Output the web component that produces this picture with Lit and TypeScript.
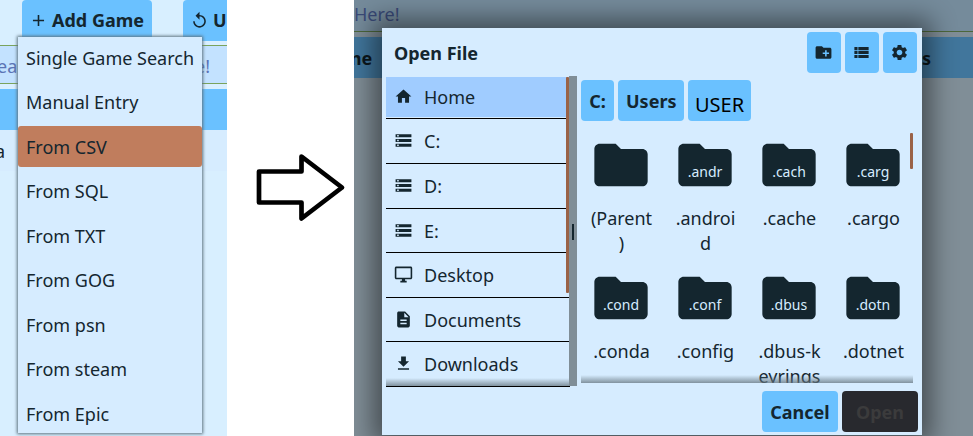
import { LitElement, html, css, svg } from "lit";
import { customElement, property } from "lit/decorators.js";

const ICONS: Record<string, string> = {
  plus: "M19 13h-6v6h-2v-6H5v-2h6V5h2v6h6v2z",
  replay: "M12 5V1L7 6l5 5V7c3.31 0 6 2.69 6 6s-2.69 6-6 6-6-2.69-6-6H4c0 4.42 3.58 8 8 8s8-3.58 8-8-3.58-8-8-8z",
  home: "M10 20v-6h4v6h5v-8h3L12 3 2 12h3v8z",
  storage: "M2 20h20v-4H2v4zm2-3h2v2H4v-2zM2 4v4h20V4H2zm4 3H4V5h2v2zm-4 7h20v-4H2v4zm2-3h2v2H4v-2z",
  desktop: "M21 2H3c-1.1 0-2 .9-2 2v12c0 1.1.9 2 2 2h7v2H8v2h8v-2h-2v-2h7c1.100 0 2-.9 2-2V4c0-1.100-.9-2-2-2zm0 14H3V4h18v12z",
  document: "M14 2H6c-1.100 0-1.990.9-1.990 2L4 20c0 1.100.89 2 1.990 2H18c1.100 0 2-.9 2-2V8l-6-6zm2 16H8v-2h8v2zm0-4H8v-2h8v2zm-3-5V3.500L18.500 9H13z",
  download: "M19 9h-4V3H9v6H5l7 7 7-7zM5 18v2h14v-2H5z",
  newFolder: "M20 6h-8l-2-2H4c-1.110 0-1.990.89-1.990 2L2 18c0 1.110.89 2 2 2h16c1.110 0 2-.89 2-2V8c0-1.110-.89-2-2-2zm-1 8h-3v3h-2v-3h-3v-2h3V9h2v3h3v2z",
  list: "M3 14h4v-4H3v4zm0 5h4v-4H3v4zM3 9h4V5H3v4zm5 5h13v-4H8v4zm0 5h13v-4H8v4zM8 5v4h13V5H8z",
  settings: "M19.140 12.940c.04-.3.06-.61.06-.94 0-.32-.02-.64-.07-.94l2.030-1.580c.18-.14.23-.41.12-.61l-1.920-3.320c-.12-.22-.37-.29-.59-.22l-2.390.96c-.5-.38-1.030-.7-1.620-.94l-.36-2.540c-.04-.24-.24-.41-.48-.41h-3.840c-.24 0-.43.17-.47.41l-.36 2.540c-.59.24-1.130.57-1.620.94l-2.390-.96c-.22-.08-.47 0-.59.22L2.740 8.870c-.12.21-.08.47.12.61l2.030 1.580c-.05.3-.09.63-.09.94s.02.64.07.94l-2.030 1.580c-.18.14-.23.41-.12.61l1.920 3.320c.12.22.37.29.59.22l2.390-.96c.5.38 1.030.7 1.620.94l.36 2.540c.05.24.24.41.48.41h3.840c.24 0 .44-.17.47-.41l.36-2.540c.59-.24 1.130-.56 1.620-.94l2.390.96c.22.08.47 0 .59-.22l1.920-3.320c.12-.22.07-.47-.12-.61l-2.010-1.580zM12 15.600c-1.980 0-3.600-1.620-3.600-3.600s1.620-3.600 3.600-3.600 3.600 1.620 3.600 3.600-1.620 3.600-3.600 3.600z",
  folder: "M10 4H4c-1.100 0-1.990.9-1.990 2L2 18c0 1.100.9 2 2 2h16c1.100 0 2-.9 2-2V8c0-1.100-.9-2-2-2h-8l-2-2z",
};

@customElement("ui-icon")
class UiIcon extends LitElement {
  @property() name = "";
  static styles = css`
    :host { display: block; width: 19px; height: 19px; flex: none; }
    svg { display: block; width: 100%; height: 100%; fill: #14262f; }
  `;
  render() {
    return html`<svg viewBox="0 0 24 24">${svg`<path fill-rule="evenodd" d=${ICONS[this.name]} />`}</svg>`;
  }
}

@customElement("import-menu")
class ImportMenu extends LitElement {
  static styles = css`
    :host { display: block; position: relative; width: 227px; height: 436px; overflow: hidden; background: #d8efff; }
    .toolbar { display: flex; gap: 31px; padding-left: 22px; height: 41px; }
    .btn { box-sizing: border-box; display: flex; align-items: center; gap: 4px; height: 41px; width: 130px; flex: none; padding: 0 0 1px 7px; border-radius: 4px; background: #6ac1ff; font-weight: 700; font-size: 18px; white-space: nowrap; }
    .search { box-sizing: border-box; height: 39px; margin: 4px -4px 0; padding: 0 20px 0 1px; border: 1px solid #7aa35c; background: #c3e2ff; color: #5a73b5; display: flex; justify-content: space-between; line-height: 41px; }
    .search span:first-child { margin-left: -1px; }
    .head { height: 41px; margin-top: 5px; background: #6ac1ff; }
    .row { height: 41px; line-height: 42px; background: #d6ecff; }
    .row span { margin-left: -5px; }
    .menu { position: absolute; left: 18px; top: 37px; width: 184px; height: 396px; background: #d6ecff; box-shadow: 0 0 3px 1px #5c717d; }
    .item { height: 41px; margin-bottom: 3.45px; padding-left: 8px; line-height: 42px; border-radius: 3px; white-space: nowrap; }
    .active { background: #c07d5d; }
  `;
  render() {
    const items = ["Single Game Search", "Manual Entry", "From CSV", "From SQL", "From TXT", "From GOG", "From psn", "From steam", "From Epic"];
    return html`
      <div class="toolbar">
        <div class="btn"><ui-icon name="plus"></ui-icon>Add Game</div>
        <div class="btn"><ui-icon name="replay"></ui-icon>Update</div>
      </div>
      <div class="search"><span>ear</span><span>e!</span></div>
      <div class="head"></div>
      <div class="row"><span>a</span></div>
      <div class="menu">${items.map((t) => html`<div class="item ${t === "From CSV" ? "active" : ""}">${t}</div>`)}</div>
    `;
  }
}

@customElement("file-dialog")
class FileDialog extends LitElement {
  static styles = css`
    :host { box-sizing: border-box; display: flex; flex-direction: column; width: 540px; height: 407px; background: #d6ecff; box-shadow: 0 0 24px 9px rgba(0, 0, 0, .46); }
    .title { display: flex; height: 48px; box-sizing: border-box; padding: 4px 5px 0 12px; gap: 4px; }
    .title b { flex: 1; line-height: 42px; }
    .tool { width: 34px; height: 41px; border-radius: 4px; background: #6ac1ff; display: flex; align-items: center; justify-content: center; }
    .tool ui-icon { margin-right: 1px; }
    .body { display: flex; height: 311px; padding-left: 4px; }
    .side { position: relative; width: 183px; height: 310px; }
    .place { box-sizing: border-box; width: 184px; height: 44.6px; border-bottom: 1px solid #000; display: flex; align-items: flex-start; padding: 0 0 0 8px; gap: 11px; line-height: 45.6px; }
    .places { padding-top: 1px; height: 310px; box-sizing: border-box; position: relative; }
    .place ui-icon { margin-top: 12px; }
    .place:first-child { height: 42px; line-height: 41px; background: linear-gradient(#a0ccff 40px, transparent 40px); margin-bottom: .4px; }
    .place:first-child ui-icon { margin-top: 10px; }
    .bar { position: absolute; right: 0; top: 1px; width: 3px; height: 216px; background: #9a6247; border-radius: 1px; }
    .fade { position: absolute; left: 0; right: 0; bottom: 0; height: 8px; background: linear-gradient(rgba(110,125,135,0), rgba(100,116,126,.75)); }
    .split { width: 8px; height: 310px; background: #808e97; display: flex; align-items: center; justify-content: center; position: relative; }
    .split i { width: 2px; height: 16px; background: #14262f; margin-top: 2px; }
    .main { margin-left: 4px; width: 332px; }
    .crumbs { display: flex; gap: 4px; padding-top: 4px; }
    .crumb { box-sizing: border-box; height: 41px; line-height: 42px; padding: 0 8px; border-radius: 4px; background: #6ac1ff; font-weight: 700; text-align: center; }
    .drive { width: 33px; }
    .users { width: 66px; }
    .user { width: 63px; padding: 0 8px 0 7px; font-weight: 400; font-size: 20px; color: #000; line-height: 50px; }
    .files { position: relative; overflow: hidden; display: grid; grid-template-columns: repeat(4, 80px); grid-auto-rows: 133px; column-gap: 4px; height: 257px; margin-top: 5px; }
    .file { display: flex; flex-direction: column; align-items: center; }
    .glyph { position: relative; width: 64px; height: 64px; margin-top: 7px; }
    .glyph ui-icon { width: 64px; height: 64px; }
    .glyph span { position: absolute; left: 0; right: 0; top: 29px; text-align: center; font-size: 14px; line-height: 20px; color: #d6ecff; }
    .name { margin-top: 9px; padding-left: 1px; width: 66px; text-align: center; line-height: 24.5px; white-space: pre; display: flex; justify-content: center; }
    .thumb { position: absolute; right: 0; top: 7px; width: 3px; height: 36px; border-radius: 1px; background: #9a6247; }
    .actions { display: flex; justify-content: flex-end; gap: 4px; padding: 4px 4px 0 0; }
    .act { width: 76px; height: 41px; line-height: 42px; border-radius: 4px; background: #6ac1ff; text-align: center; font-weight: 700; }
    .off { background: #28292e; color: #3b3b3c; }
  `;
  render() {
    const places = [["home", "Home"], ["storage", "C:"], ["storage", "D:"], ["storage", "E:"], ["desktop", "Desktop"], ["document", "Documents"], ["download", "Downloads"]];
    const files = [["", "(Parent\n)"], [".andr", ".androi\nd"], [".cach", ".cache"], [".carg", ".cargo"], [".cond", ".conda"], [".conf", ".config"], [".dbus", ".dbus-k\neyrings"], [".dotn", ".dotnet"]];
    return html`
      <div class="title"><b>Open File</b>
        ${["newFolder", "list", "settings"].map((n) => html`<div class="tool"><ui-icon name=${n}></ui-icon></div>`)}
      </div>
      <div class="body">
        <div class="side">
          <div class="places">${places.map(([i, t]) => html`<div class="place"><ui-icon name=${i}></ui-icon>${t}</div>`)}</div>
          <div class="bar"></div><div class="fade"></div>
        </div>
        <div class="split"><i></i></div>
        <div class="main">
          <div class="crumbs"><div class="crumb drive">C:</div><div class="crumb users">Users</div><div class="crumb user">USER</div></div>
          <div class="files">
            ${files.map(([s, n]) => html`<div class="file"><div class="glyph"><ui-icon name="folder"></ui-icon><span>${s}</span></div><div class="name">${n}</div></div>`)}
            <div class="thumb"></div><div class="fade"></div>
          </div>
        </div>
      </div>
      <div class="actions"><div class="act">Cancel</div><div class="act off">Open</div></div>
    `;
  }
}

@customElement("app-root")
class AppRoot extends LitElement {
  static styles = css`
    :host { display: flex; width: 973px; height: 436px; overflow: hidden; background: #fff; color: #14262f; font: 18px "Noto Sans", sans-serif; }
    .gap { width: 127px; display: flex; align-items: center; justify-content: center; }
    .arrow { width: 127px; height: 436px; }
    .window { position: relative; width: 619px; height: 436px; background: #808e97; overflow: hidden; }
    .search { box-sizing: border-box; height: 32px; background: #758b9b; border-bottom: 1px solid #4c673c; color: #3a4a78; line-height: 29px; }
    .head { margin-top: 5px; height: 41px; line-height: 42px; background: #41769c; display: flex; justify-content: space-between; font-weight: 700; color: #0c171c; padding-right: 42px; }
    .head span:first-child { margin-left: -10px; }
    file-dialog { position: absolute; left: 28px; top: 28px; }
  `;
  render() {
    return html`
      <import-menu></import-menu>
      <div class="gap"><svg class="arrow" viewBox="0 0 127 436"><path d="M32.500 171.500H75V156.500L115.500 187.500 75 218.500V202.500H32.500Z" transform="translate(-.5 0)" fill="#fff" stroke="#000" stroke-width="4.700" stroke-linejoin="round" /></svg></div>
      <div class="window">
        <div class="search">Here!</div>
        <div class="head"><span>me</span><span>s</span></div>
        <file-dialog></file-dialog>
      </div>
    `;
  }
}
